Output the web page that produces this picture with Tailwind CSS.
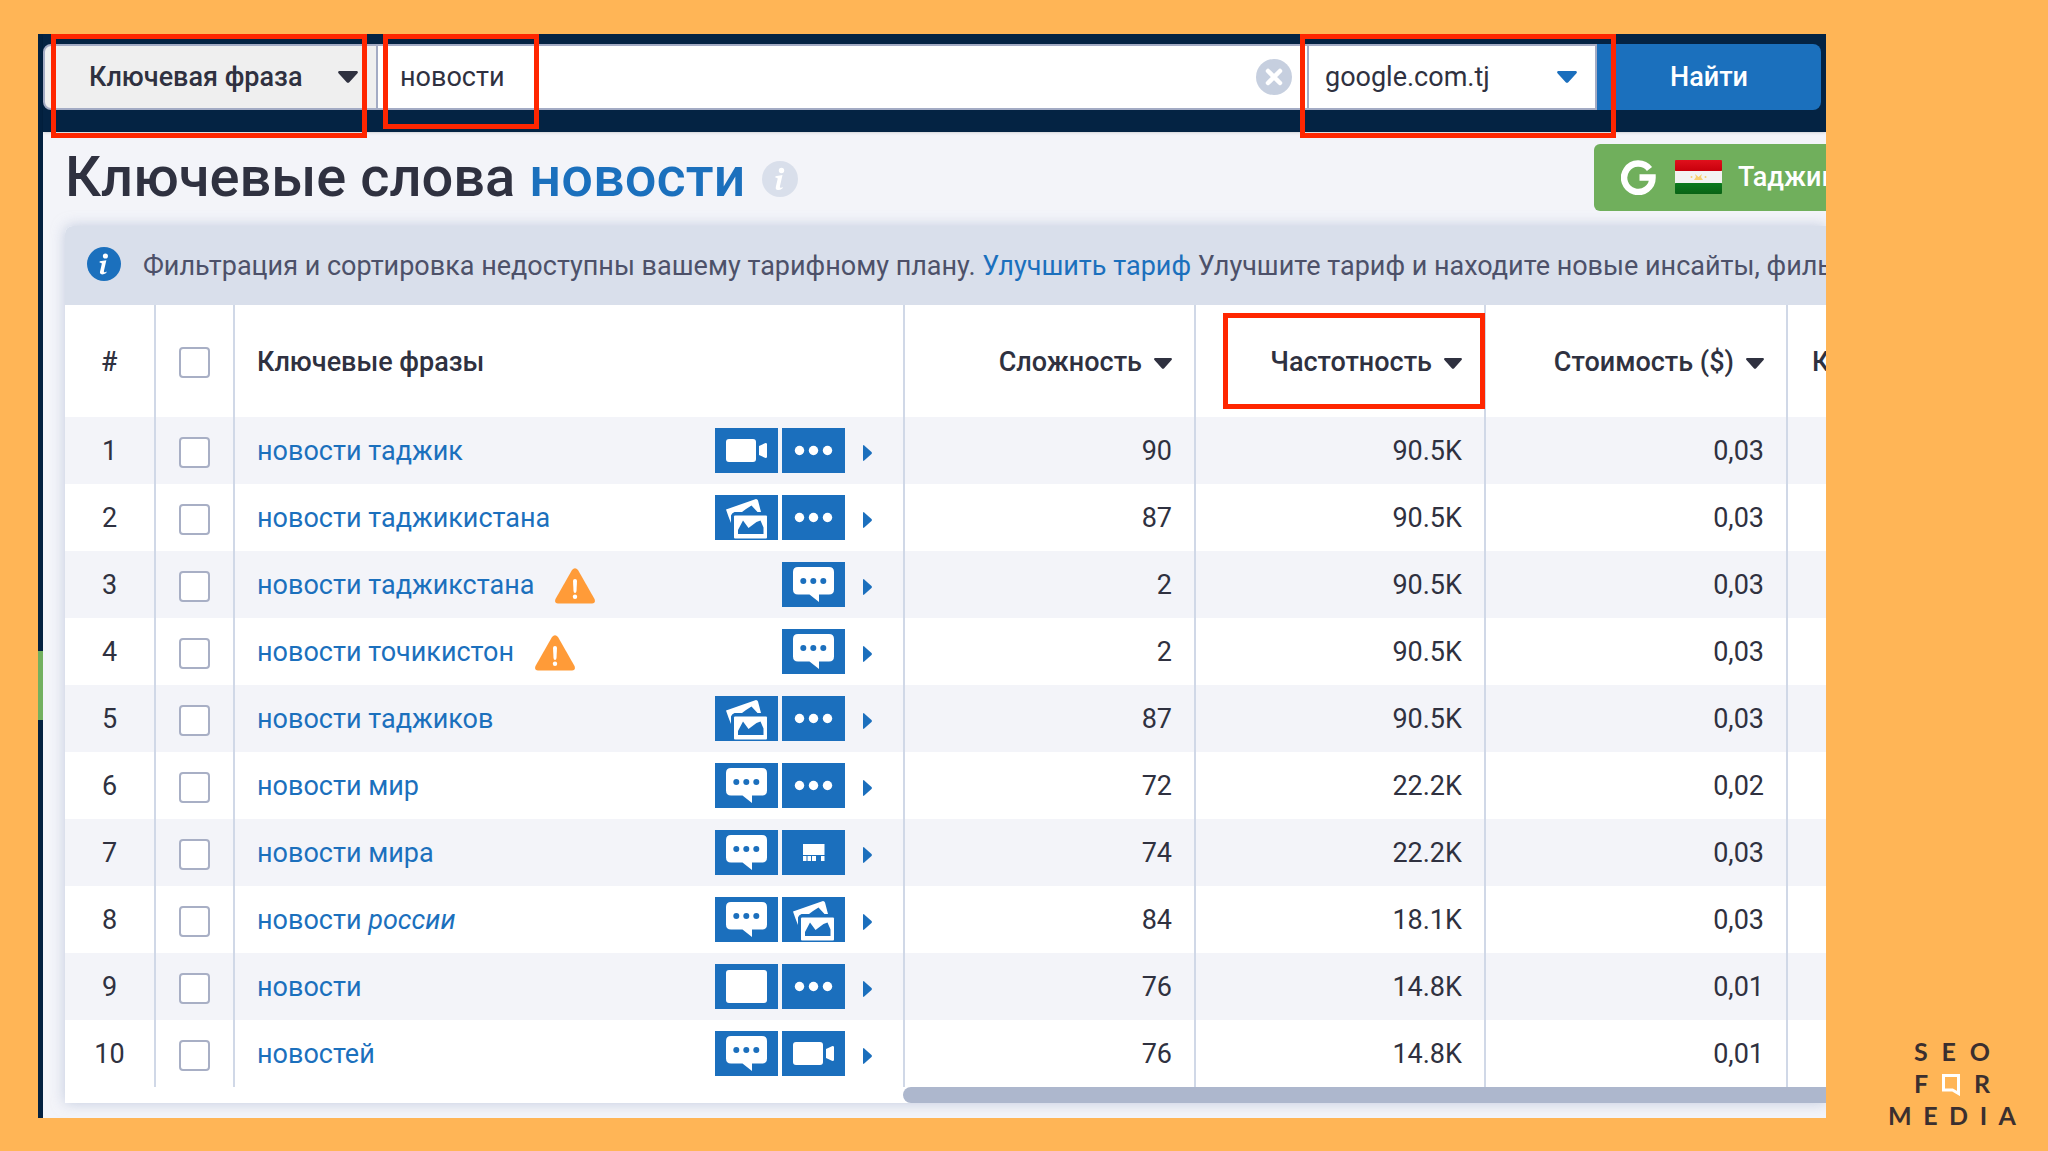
<!DOCTYPE html>
<html lang="ru">
<head>
<meta charset="utf-8">
<title>Ключевые слова новости</title>
<script src="https://cdn.jsdelivr.net/npm/@tailwindcss/browser@4"></script>
</head>
<body class="min-h-screen bg-[#ffb556] font-['Roboto',sans-serif] text-[27px] leading-8 text-[#2f3140] flex items-start overflow-hidden">

<svg class="hidden" aria-hidden="true">
  <symbol id="caret" viewBox="0 0 20 12"><path d="M1.500 0h17c1.300 0 1.800 1.300 1 2.200l-8.200 9c-.7.8-1.900.8-2.600 0L.5 2.200C-.3 1.300.2 0 1.500 0z" fill="currentColor"/></symbol>
  <symbol id="video" viewBox="0 0 63 45"><rect x="11" y="11" width="30" height="23" rx="3" fill="#fff"/><path d="M44 18l6.500-3q1.500 0 1.500 1v13q0 1-1.500 1L44 27z" fill="#fff"/></symbol>
  <symbol id="more" viewBox="0 0 63 45"><circle cx="17.500" cy="22.500" r="4.700" fill="#fff"/><circle cx="31.500" cy="22.500" r="4.700" fill="#fff"/><circle cx="45.500" cy="22.500" r="4.700" fill="#fff"/></symbol>
  <symbol id="images" viewBox="0 0 63 45"><path d="M11 14.500L41 4q1.500 0 2 1.500L46 17h-3.500l-6-6.500-5.500 3.500-4 3h-7.500q-3 1-3.500 3.500V28q-2.500-6-5-13.500z" fill="#fff"/><rect x="19" y="20.500" width="33" height="23" rx="1" fill="#fff"/><path d="M23 39v-4l5-9.500 5.500 7.500 8-6 4-1.500 3 7V39z" fill="#1b6fbd"/></symbol>
  <symbol id="chat" viewBox="0 0 63 45"><path d="M16 5h31q5 0 5 5v17.500q0 5-5 5H37V40l-9.500-7.500H16q-5 0-5-5V10q0-5 5-5z" fill="#fff"/><circle cx="21.300" cy="19" r="3" fill="#1b6fbd"/><circle cx="31.300" cy="19" r="3" fill="#1b6fbd"/><circle cx="41.300" cy="19" r="3" fill="#1b6fbd"/></symbol>
  <symbol id="shop" viewBox="0 0 63 45"><path d="M21 14h21.500v11H21zM21 26h3.500v5H21zM25.500 26h3.500v5h-3.500zM30 26h4v5h-4zM39 26h3.500v5H39z" fill="#fff"/></symbol>
  <symbol id="block" viewBox="0 0 63 45"><rect x="11" y="6" width="41" height="33" rx="3" fill="#fff"/></symbol>
  <symbol id="warn" viewBox="0 0 42 36"><path d="M18 2q3-3.500 6 0l16.500 29q1.500 4-2.500 4.500H4Q0 35 1.500 31z" fill="#ff9b38"/><path d="M19 13q0-2 2-2t2 2l-.5 10q-.2 2-1.500 2t-1.500-2z" fill="#fff"/><circle cx="21" cy="28.800" r="2.200" fill="#fff"/></symbol>
  <symbol id="info" viewBox="0 0 36 36"><circle cx="18" cy="18" r="18" fill="currentColor"/><circle cx="19.500" cy="9.500" r="2.700" fill="#fff"/><path d="M13.500 15.200l7-1.200-2.600 11.500q-.3 1.800 1.300 1.200l1.600-.8-.4 1.600q-2.200 1.500-4.400 1.500-2.800-.2-2.200-3l1.900-8.300q.2-1-2.400-1.200z" fill="#fff"/></symbol>
</svg>

<main class="relative ml-[38px] mt-[34px] flex min-w-0 flex-1 overflow-hidden bg-[#f3f4f9]">
  <nav class="flex w-[5px] shrink-0 flex-col bg-[#032140]" aria-label="Меню">
    <div class="mt-[617px] h-[69px] bg-[#72b05f]"></div>
  </nav>

  <div class="min-w-0 flex-1">
    <header class="relative bg-[#042343] pt-[10px] pb-[22px] pr-[5px] shadow-sm">
      <form class="flex h-[66px]" onsubmit="return false">
        <div class="grid w-[335px] shrink-0 items-center">
          <select aria-label="Тип запроса" class="col-start-1 row-start-1 h-full w-full appearance-none rounded-l-lg border-2 border-[#a3abc4] bg-[#efefef] pl-[44px] font-medium">
            <option>Ключевая фраза</option>
          </select>
          <svg class="pointer-events-none col-start-1 row-start-1 mr-[20px] h-3 w-5 justify-self-end"><use href="#caret"/></svg>
        </div>
        <div class="grid min-w-0 flex-1 items-center">
          <input aria-label="Запрос" value="новости" class="col-start-1 row-start-1 h-full w-full border-y-2 border-[#a3abc4] bg-white pl-[22px]">
          <button type="button" aria-label="Очистить" class="col-start-1 row-start-1 mr-[15px] justify-self-end">
            <svg class="size-9" viewBox="0 0 36 36"><circle cx="18" cy="18" r="18" fill="#c6cfdf"/><path d="M12 12l12 12M24 12L12 24" stroke="#fff" stroke-width="4.500" stroke-linecap="round"/></svg>
          </button>
        </div>
        <div class="grid w-[290px] shrink-0 items-center">
          <select aria-label="Поисковая система" class="col-start-1 row-start-1 h-full w-full appearance-none border-2 border-[#a3abc4] bg-white pl-4">
            <option>google.com.tj</option>
          </select>
          <svg class="pointer-events-none col-start-1 row-start-1 mr-[20px] h-3 w-5 justify-self-end text-[#1b6fbd]"><use href="#caret"/></svg>
        </div>
        <button class="w-[224px] shrink-0 rounded-r-lg bg-[#1b70bd] font-medium text-white">Найти</button>
      </form>
    </header>

    <div class="flex h-[94px] items-center justify-between pb-1 pl-[22px]">
      <h1 class="flex items-center text-[56px] leading-16 font-medium whitespace-nowrap">
        <span>Ключевые слова <span class="text-[#1b70bd]">новости</span></span>
        <svg class="ml-4 mt-1 size-9 text-[#d9dfeb]"><use href="#info"/></svg>
      </h1>
      <button class="flex h-[67px] w-[232px] shrink-0 items-center overflow-hidden rounded-l-md bg-[#70af5c] pl-[27px] font-medium whitespace-nowrap text-white">
        <svg class="mr-[19px] h-[35px] w-[35px] shrink-0" viewBox="0 0 35 35"><path d="M28.500 9A14.200 14.200 0 1 0 31.500 17.500H18.500" fill="none" stroke="#fff" stroke-width="6.500"/></svg>
        <svg class="mr-4 h-[34px] w-[47px] shrink-0" viewBox="0 0 47 34"><defs><linearGradient id="r" x2="0" y2="1"><stop stop-color="#e0101c"/><stop offset="1" stop-color="#c8000c"/></linearGradient><linearGradient id="g" x2="0" y2="1"><stop stop-color="#0b7a1e"/><stop offset="1" stop-color="#096315"/></linearGradient></defs><rect width="47" height="11" rx="1" fill="url(#r)"/><rect y="11" width="47" height="12" fill="#f3f3f3"/><rect y="23" width="47" height="11" rx="1" fill="url(#g)"/><g fill="#f7d070"><path d="M20 14l3.500 3L27 14l-1 3 2 3h-9l2-3z"/><circle cx="16.500" cy="17" r="1"/><circle cx="30.500" cy="17" r="1"/></g></svg>
        Таджикистан
      </button>
    </div>

    <section class="ml-[22px] mb-[15px] overflow-hidden rounded-tl-lg bg-white shadow-[0_0_14px_rgba(160,175,205,0.6)]">
      <div class="flex h-[79px] items-center bg-[#d9dfeb] pl-[22px] whitespace-nowrap text-[#4d5169]">
        <svg class="mr-[22px] mb-1 size-[34px] shrink-0 text-[#1b70bd]"><use href="#info"/></svg>
        <p>Фильтрация и сортировка недоступны вашему тарифному плану. <a href="#" class="text-[#1b70bd]">Улучшить тариф</a> Улучшите тариф и находите новые инсайты, фильтруя</p>
      </div>

      <table class="w-[2022px] table-fixed border-collapse text-right">
        <colgroup><col class="w-[90px]"><col class="w-[79px]"><col class="w-[670px]"><col class="w-[291px]"><col class="w-[290px]"><col class="w-[302px]"><col class="w-[300px]"></colgroup>
        <thead>
          <tr class="h-[112px] *:border-r-2 *:border-[#d0d8e7] *:pt-0.5 *:font-medium">
            <th class="text-center">#</th>
            <th><input type="checkbox" aria-label="Выбрать все" class="mx-auto block size-[31px] appearance-none rounded border-2 border-[#a8afc5] bg-white"></th>
            <th class="pl-[22px] text-left">Ключевые фразы</th>
            <th class="pr-[22px]">Сложность<svg class="ml-3 inline-block h-[11px] w-[18px] align-[2px]"><use href="#caret"/></svg></th>
            <th class="relative pr-[22px]">Частотность<svg class="ml-3 inline-block h-[11px] w-[18px] align-[2px]"><use href="#caret"/></svg>
              <span class="absolute top-2 right-[-1px] left-[27px] h-24 border-5 border-[#ff2600]"></span></th>
            <th class="pr-[22px]">Стоимость ($)<svg class="ml-3 inline-block h-[11px] w-[18px] align-[2px]"><use href="#caret"/></svg></th>
            <th class="pl-[24px] text-left">Конкуренция</th>
          </tr>
        </thead>
        <tbody id="rows"></tbody>
      </table>
      <div class="ml-[838px] h-4 rounded-l-full bg-[#adb7cd]"></div>
    </section>
  </div>

  <div class="pointer-events-none absolute top-0 left-[13px] h-[104px] w-[316px] border-5 border-[#ff2600]"></div>
  <div class="pointer-events-none absolute top-0 left-[345px] h-[95px] w-[156px] border-5 border-[#ff2600]"></div>
  <div class="pointer-events-none absolute top-0 right-[210px] h-[104px] w-[316px] border-5 border-[#ff2600]"></div>
</main>

<aside class="flex w-[222px] shrink-0 flex-col items-center self-end pb-5 pl-[30px] font-['Lato',sans-serif] text-[25px] leading-8 font-bold text-[#3b2f2f]" aria-label="SEO for media">
  <div class="flex w-[76px] justify-between"><span>S</span><span>E</span><span>O</span></div>
  <div class="flex w-[76px] items-center justify-between"><span>F</span><svg class="mt-1 h-[22px] w-[18px]" viewBox="0 0 18 22"><path d="M1.500 1.500h15v18l-6-3.500h-9z" fill="none" stroke="#fff" stroke-width="3"/></svg><span>R</span></div>
  <div class="flex w-[128px] justify-between"><span>M</span><span>E</span><span>D</span><span>I</span><span>A</span></div>
</aside>

<script>
const rows = [
  ['новости таджик', ['video', 'more'], '90', '90.5K', '0,03'],
  ['новости таджикистана', ['images', 'more'], '87', '90.5K', '0,03'],
  ['новости таджикстана', ['chat'], '2', '90.5K', '0,03', true],
  ['новости точикистон', ['chat'], '2', '90.5K', '0,03', true],
  ['новости таджиков', ['images', 'more'], '87', '90.5K', '0,03'],
  ['новости мир', ['chat', 'more'], '72', '22.2K', '0,02'],
  ['новости мира', ['chat', 'shop'], '74', '22.2K', '0,03'],
  ['новости <em>россии</em>', ['chat', 'images'], '84', '18.1K', '0,03'],
  ['новости', ['block', 'more'], '76', '14.8K', '0,01'],
  ['новостей', ['chat', 'video'], '76', '14.8K', '0,01'],
];
document.getElementById('rows').innerHTML = rows.map(([phrase, icons, kd, volume, cost, warn], i) => `
  <tr class="h-[67px] odd:bg-[#f3f4f9] *:border-r-2 *:border-[#d0d8e7]">
    <td class="text-center">${i + 1}</td>
    <td><input type="checkbox" aria-label="Выбрать строку ${i + 1}" class="mx-auto mt-1 block size-[31px] appearance-none rounded border-2 border-[#a8afc5] bg-white"></td>
    <td class="pl-[22px]"><div class="flex items-center">
      <a href="#" class="text-[#1b70bd]">${phrase}</a>
      ${warn ? '<svg class="ml-5 mt-0.5 h-9 w-[42px]"><use href="#warn"/></svg>' : ''}
      <div class="ml-auto flex gap-1">${icons.map(n => `<svg class="h-[45px] w-[63px] bg-[#1b6fbd]"><use href="#${n}"/></svg>`).join('')}</div>
      <button aria-label="Подробнее" class="mr-[31px] ml-[18px]"><svg class="mt-1 h-4 w-[9px]" viewBox="0 0 9 16"><path d="M0 1q0-1.500 1.200-.6L8.500 7q.8 1 0 2l-7.300 6.600Q0 16.500 0 15z" fill="#1b6fbd"/></svg></button>
    </div></td>
    <td class="pr-[22px]">${kd}</td><td class="pr-[22px]">${volume}</td><td class="pr-[22px]">${cost}</td><td></td>
  </tr>`).join('');
</script>
</body>
</html>
